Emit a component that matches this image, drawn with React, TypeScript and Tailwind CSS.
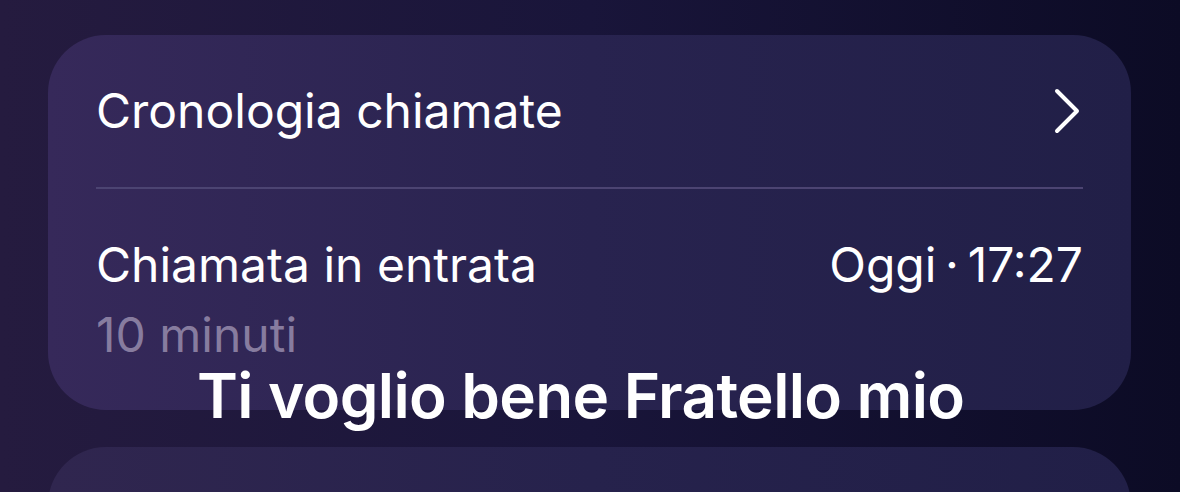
export default function App() {
  return (
    <div
      className="relative h-[492px] w-full overflow-hidden bg-gradient-to-r from-[#251b3f] via-[#19153a] to-[#0c0b25] pt-[35px] pl-[48px] pr-[49px]"
      style={{ fontFamily: 'Inter, "Noto Sans", sans-serif' }}
    >
      {/* Card: call history */}
      <div className="h-[375px] rounded-[58px] bg-gradient-to-r from-[#36295a] via-[#28234f] to-[#211f47] px-12">
        <div className="flex h-[152px] items-center justify-between">
          <span className="text-[48px] leading-none text-white">Cronologia chiamate</span>
          <svg width="28" height="48" viewBox="0 0 28 48" fill="none" className="mr-[2px]">
            <polyline points="4,4 24,24 4,44" stroke="white" strokeWidth="4" strokeLinecap="round" strokeLinejoin="round" />
          </svg>
        </div>
        <div className="h-[2px] bg-[#4c4472]" />
        <div className="mt-[47px] flex items-center justify-between">
          <span className="text-[48px] leading-[58px] text-white">Chiamata in entrata</span>
          <span className="text-[48px] leading-[58px] text-white">Oggi{'\u2009'}·{'\u2009'}17:27</span>
        </div>
        <div className="mt-[12px] text-[48px] leading-[58px] text-[#877c9f]">10 minuti</div>
      </div>

      {/* Next card peeking */}
      <div className="mt-[37px] h-[200px] rounded-[58px] bg-gradient-to-r from-[#30264f] via-[#26224c] to-[#211f47]" />

      {/* Caption overlay */}
      <div className="absolute left-[197px] top-[358px] text-[62px] font-semibold leading-[76px] text-white tracking-[-0.01em]">
        Ti voglio bene Fratello mio
      </div>
    </div>
  );
}
